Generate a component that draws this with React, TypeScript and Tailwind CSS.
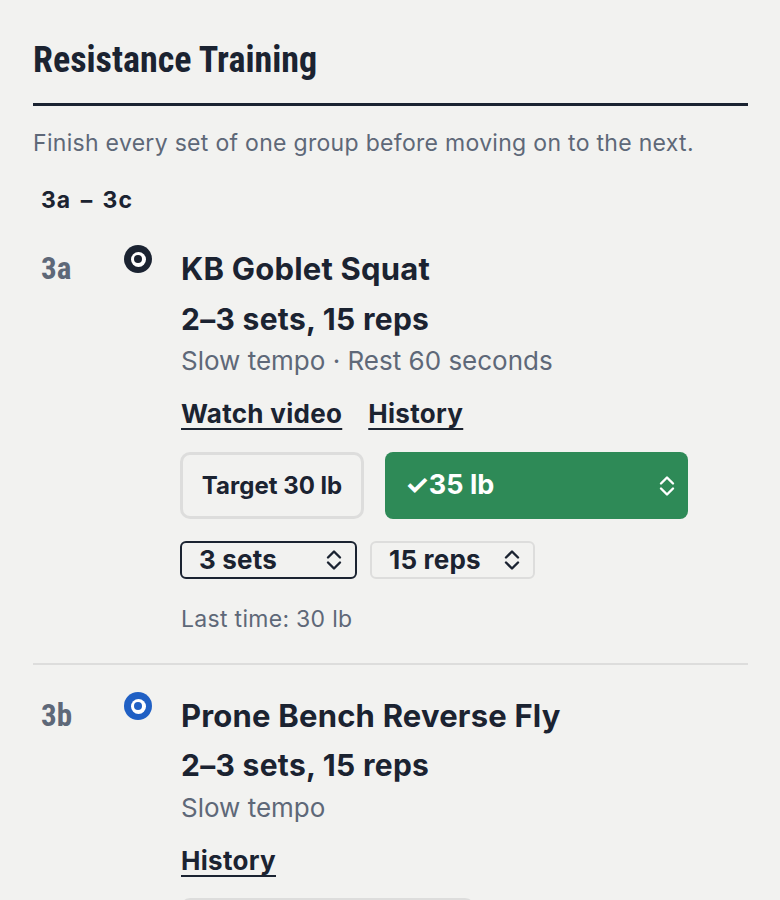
const narrow = "font-['Liberation_Sans_Narrow','Roboto_Condensed','DejaVu_Sans_Condensed',sans-serif]";

function UpDown({ className }: { className?: string }) {
  return (
    <svg width="16" height="22" viewBox="0 0 16 22" fill="none" stroke="currentColor" strokeWidth="2.4" strokeLinecap="round" strokeLinejoin="round" className={className}>
      <path d="M2 8.5 8 2.5 14 8.5" />
      <path d="M2 13.5 8 19.5 14 13.5" />
    </svg>
  );
}

function Dot({ color }: { color: string }) {
  return (
    <div className={`mt-[-6px] w-[28px] h-[28px] rounded-full flex items-center justify-center ${color}`}>
      <div className="w-[15px] h-[15px] rounded-full bg-white flex items-center justify-center">
        <div className={`w-[8px] h-[8px] rounded-full ${color}`}></div>
      </div>
    </div>
  );
}

function Stepper({ label, dark, w }: { label: string; dark?: boolean; w: string }) {
  return (
    <div
      className={`${w} h-[38px] rounded-[6px] border-2 flex items-center justify-between pl-[17px] pr-[13px] ${
        dark ? "border-[#1b2331]" : "border-[#dddddc]"
      }`}
    >
      <span className="text-[26px] font-bold leading-none tracking-[0.2px]">{label}</span>
      <UpDown />
    </div>
  );
}

export default function App() {
  return (
    <div className="min-h-[900px] bg-[#f2f2f0] text-[#1b2331] font-['Inter',sans-serif] pl-[33px] pr-[32px] pt-[38px] overflow-hidden">
      <div className="pb-[21px] border-b-[3px] border-[#1b2331]">
        <h1 className={`${narrow} text-[36px] leading-[44px] font-bold`}>Resistance Training</h1>
      </div>

      <p className="mt-[23px] text-[23px] leading-[28px] tracking-[0.3px] text-[#5e6878]">
        Finish every set of one group before moving on to the next.
      </p>

      <div className="mt-[29px] pl-[8px] text-[23px] leading-[28px] tracking-[1px] [word-spacing:3px] font-bold">3a – 3c</div>

      {/* 3a */}
      <div className="mt-[37px] pl-[8px] pb-[30px] border-b-2 border-[#dddddc] grid grid-cols-[83px_57px_1fr]">
        <div className={`${narrow} text-[31px] leading-[36px] font-bold text-[#5e6878]`}>3a</div>
        <Dot color="bg-[#1b2331]" />
        <div>
          <h2 className="text-[31px] leading-[36px] font-bold tracking-[0.2px]">KB Goblet Squat</h2>
          <div className="mt-[14px] text-[30px] leading-[36px] font-bold tracking-[0.3px]">2–3 sets, 15 reps</div>
          <div className="mt-[8px] text-[26px] leading-[32px] text-[#5e6878]">Slow tempo · Rest 60 seconds</div>
          <div className="mt-[21px] flex gap-[26px] text-[26px] leading-[32px] font-bold tracking-[0.3px]">
            <a className="underline decoration-2 underline-offset-[5px]">Watch video</a>
            <a className="underline decoration-2 underline-offset-[5px]">History</a>
          </div>
          <div className="mt-[22px] ml-[-1px] flex gap-[21px]">
            <div className="w-[184px] h-[67px] rounded-[10px] border-[3px] border-[#dddddc] flex items-center justify-center text-[24px] font-bold">
              Target 30 lb
            </div>
            <div className="w-[303px] h-[67px] rounded-[8px] bg-[#2e8a57] text-white flex items-center justify-between pl-[20px] pr-[13px]">
              <span className="text-[27px] font-bold">✓35 lb</span>
              <UpDown />
            </div>
          </div>
          <div className="mt-[22px] ml-[-1px] flex gap-[13px]">
            <Stepper label="3 sets" dark w="w-[177px]" />
            <Stepper label="15 reps" w="w-[165px]" />
          </div>
          <div className="mt-[26px] text-[23px] leading-[28px] tracking-[0.3px] text-[#5e6878]">Last time: 30 lb</div>
        </div>
      </div>

      {/* 3b */}
      <div className="mt-[33px] pl-[8px] grid grid-cols-[83px_57px_1fr]">
        <div className={`${narrow} text-[31px] leading-[36px] font-bold text-[#5e6878]`}>3b</div>
        <Dot color="bg-[#2060c4]" />
        <div>
          <h2 className="text-[31px] leading-[36px] font-bold tracking-[0.2px]">Prone Bench Reverse Fly</h2>
          <div className="mt-[13px] text-[30px] leading-[36px] font-bold tracking-[0.3px]">2–3 sets, 15 reps</div>
          <div className="mt-[9px] text-[26px] leading-[32px] text-[#5e6878]">Slow tempo</div>
          <div className="mt-[21px] text-[26px] leading-[32px] font-bold tracking-[0.3px]">
            <a className="underline decoration-2 underline-offset-[5px]">History</a>
          </div>
          <div className="mt-[21px] ml-[-1px] w-[295px] h-[67px] rounded-[10px] border-[3px] border-[#dddddc]"></div>
        </div>
      </div>
    </div>
  );
}
